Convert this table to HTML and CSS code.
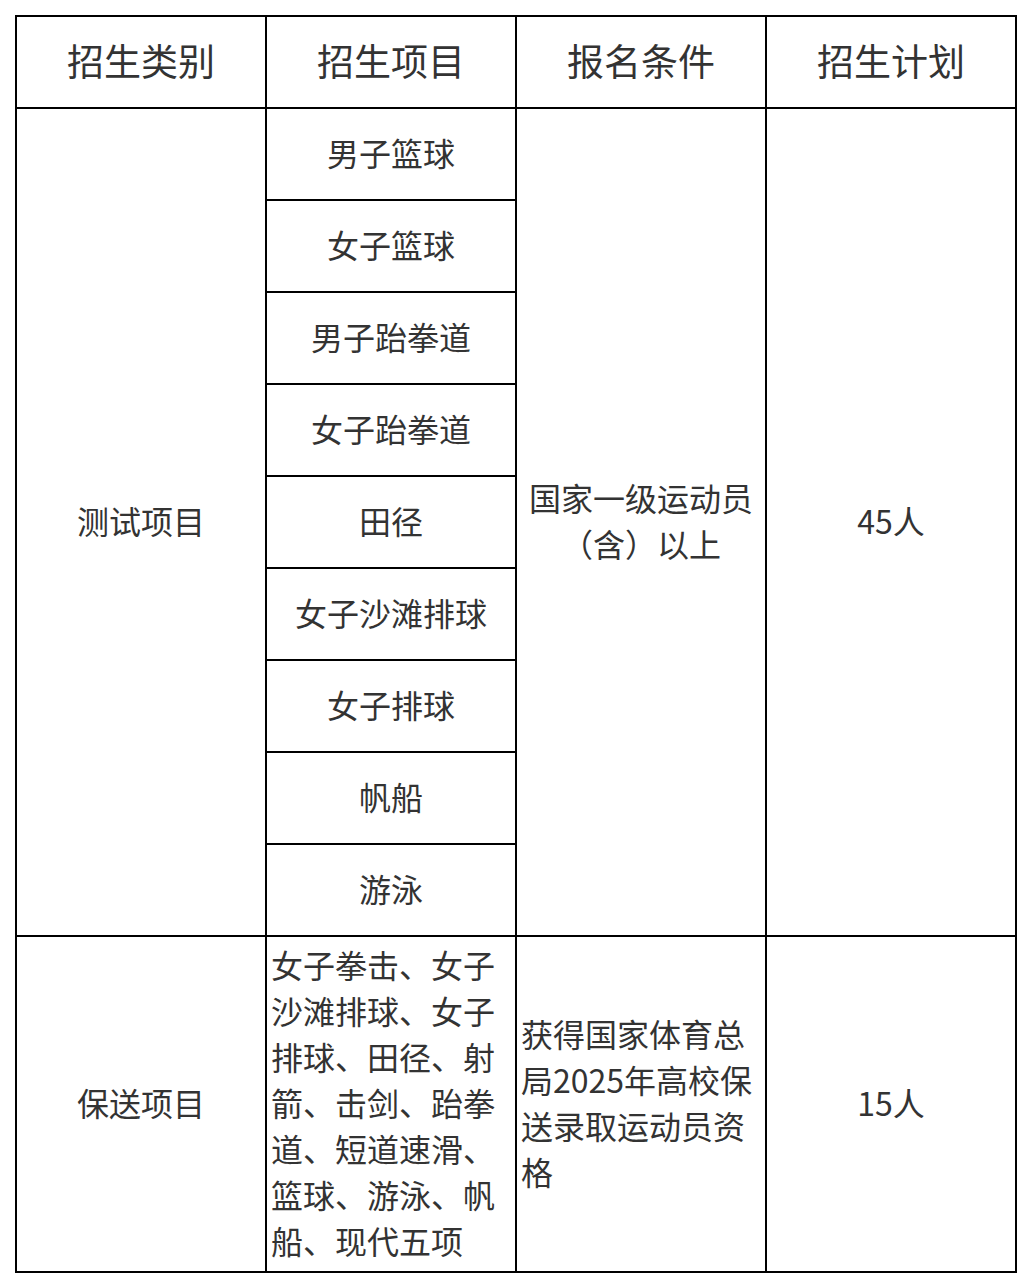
FILE: index.html
```html
<!DOCTYPE html>
<html lang="zh-CN">
<head>
<meta charset="utf-8">
<link rel="stylesheet" href="styles.css">
</head>
<body>
<table class="plan">
  <colgroup>
    <col class="col">
    <col class="col">
    <col class="col">
    <col class="col">
  </colgroup>
  <thead>
    <tr class="head-row">
      <th>招生类别</th>
      <th>招生项目</th>
      <th>报名条件</th>
      <th>招生计划</th>
    </tr>
  </thead>
  <tbody>
    <tr class="item-row">
      <td rowspan="9">测试项目</td>
      <td>男子篮球</td>
      <td rowspan="9">国家一级运动员<br>（含）以上</td>
      <td rowspan="9">45人</td>
    </tr>
    <tr class="item-row"><td>女子篮球</td></tr>
    <tr class="item-row"><td>男子跆拳道</td></tr>
    <tr class="item-row"><td>女子跆拳道</td></tr>
    <tr class="item-row"><td>田径</td></tr>
    <tr class="item-row"><td>女子沙滩排球</td></tr>
    <tr class="item-row"><td>女子排球</td></tr>
    <tr class="item-row"><td>帆船</td></tr>
    <tr class="item-row"><td>游泳</td></tr>
    <tr class="last-row">
      <td>保送项目</td>
      <td class="left">女子拳击、女子沙滩排球、女子排球、田径、射箭、击剑、跆拳道、短道速滑、篮球、游泳、帆船、现代五项</td>
      <td class="left">获得国家体育总局2025年高校保送录取运动员资格</td>
      <td>15人</td>
    </tr>
  </tbody>
</table>
</body>
</html>
```

FILE: styles.css
```css
html, body {
  margin: 0;
  padding: 0;
  background: #fff;
}
body {
  padding: 15px 0 0 15px;
  font-family: "Microsoft YaHei", "Noto Sans CJK SC", "Noto Sans", sans-serif;
  color: #333;
}
.plan {
  border-collapse: collapse;
  table-layout: fixed;
  width: 1002px;
}
.col {
  width: 250px;
}
.plan th, .plan td {
  border: 2px solid #000;
  text-align: center;
  vertical-align: middle;
  padding: 0 4px 4px;
  font-size: 32px;
  line-height: 46px;
  font-weight: normal;
  word-break: break-all;
}
.head-row th {
  height: 86px;
  font-size: 37px;
}
.item-row td {
  height: 86px;
}
.last-row td {
  height: 330px;
}
.plan td.left {
  text-align: left;
}
```
